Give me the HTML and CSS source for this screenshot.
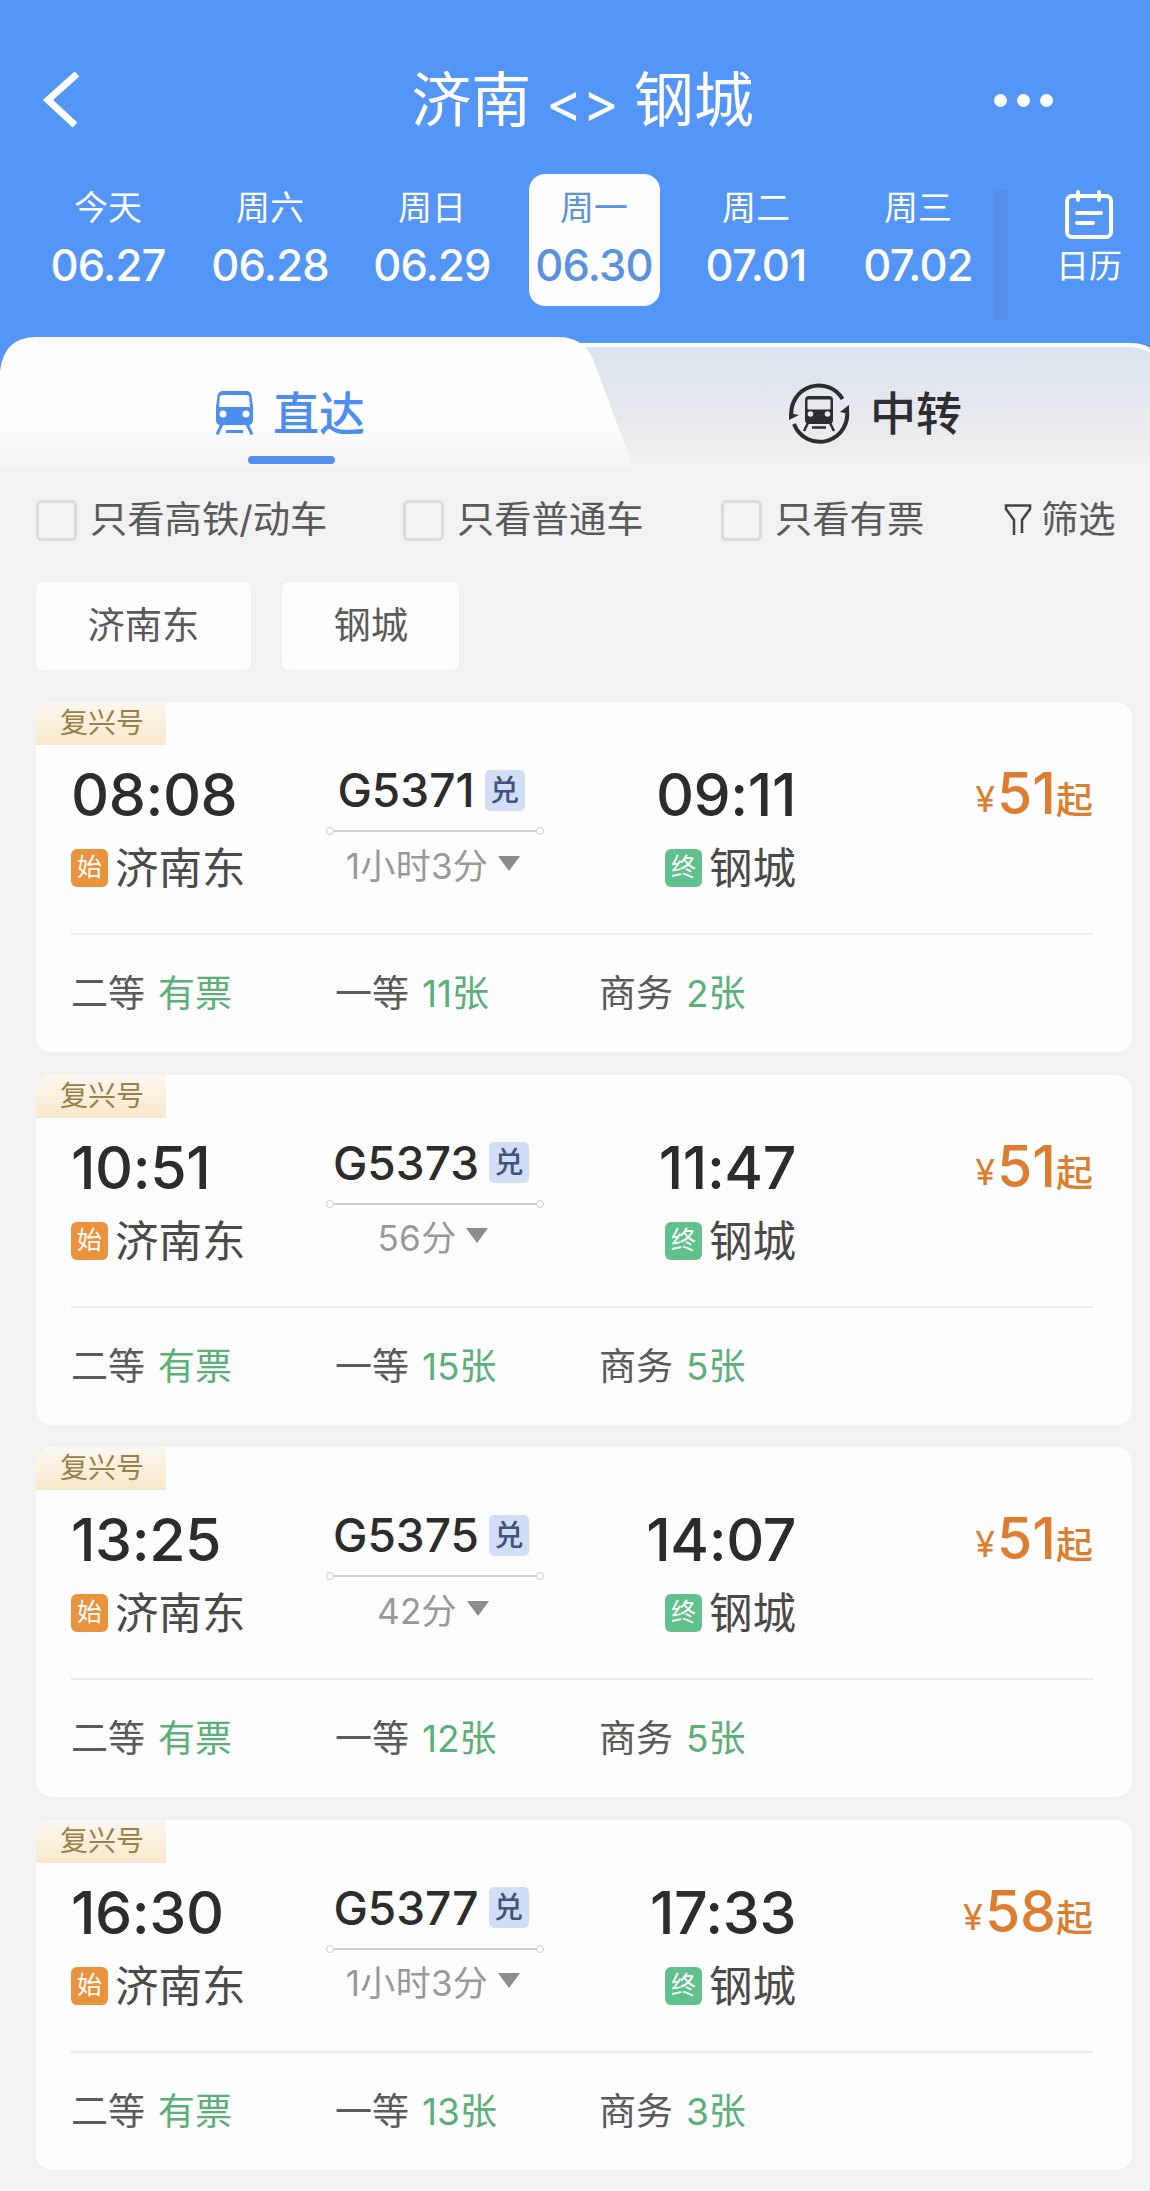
FILE: index.html
```html
<!DOCTYPE html>
<html lang="zh-CN">

<head>
    <meta charset="UTF-8">
    <title>济南 - 钢城</title>
    <link rel="stylesheet" href="styles.css">
</head>

<body>

    <header>
        <div class="title-bar">
            <svg class="back" width="38" height="56" viewBox="0 0 38 56">
                <path d="M35 2L6 28l27 25" fill="none" stroke="#fff" stroke-width="7" />
            </svg>
            <h1>济南 <span>&lt;&gt;</span> 钢城</h1>
            <div class="more"><i></i><i></i><i></i></div>
        </div>

        <div class="dates">
            <div class="day"><span>今天</span><b>06.27</b></div>
            <div class="day"><span>周六</span><b>06.28</b></div>
            <div class="day"><span>周日</span><b>06.29</b></div>
            <div class="day active"><span>周一</span><b>06.30</b></div>
            <div class="day"><span>周二</span><b>07.01</b></div>
            <div class="day"><span>周三</span><b>07.02</b></div>
            <div class="split"></div>
            <div class="calendar">
                <svg width="50" height="50" viewBox="0 0 50 50" fill="none" stroke="#fff" stroke-width="4" stroke-linecap="round">
                    <rect x="3" y="6" width="44" height="41" rx="5" />
                    <path d="M14 2v8M35 2v8" />
                    <path d="M13 23h24M13 33h16" />
                </svg>
                <span>日历</span>
            </div>
        </div>
    </header>

    <div class="tabs">
        <svg class="tabs-bg" width="1150" height="129" viewBox="0 0 1150 129">
            <defs>
                <linearGradient id="grey" x1="0" y1="0" x2="0" y2="1">
                    <stop offset="0" stop-color="#dae4ec" />
                    <stop offset="0.500" stop-color="#e6e8ef" />
                    <stop offset="0.850" stop-color="#eeeeee" />
                    <stop offset="1" stop-color="#f2f2f2" />
                </linearGradient>
                <linearGradient id="white" x1="0" y1="0" x2="0" y2="1">
                    <stop offset="0.600" stop-color="#fefefe" />
                    <stop offset="1" stop-color="#f5f5f5" />
                </linearGradient>
            </defs>
            <path d="M500 6H1130Q1143 6 1150 11V129H500z" fill="#fcfdfd" />
            <path d="M500 10H1128Q1143 10 1150 16V129H500z" fill="url(#grey)" />
            <path d="M0 129V34Q4 0 36 0H558Q582 0 592 20L633 129z" fill="url(#white)" />
        </svg>
        <div class="tab direct">
            <svg class="train" width="42" height="46" viewBox="0 0 42 46">
                <path d="M9 1h23q5 0 5.500 5L39 17v13q0 5-5 5H7q-5 0-5-5V17L3.500 6Q4 1 9 1z" fill="#4c8df0" />
                <path d="M8 5h25q2 0 2.200 2L36 17H5L5.800 7Q6 5 8 5z" fill="#fefefe" />
                <circle cx="9" cy="24" r="3.500" fill="#fefefe" />
                <circle cx="32" cy="24" r="3.500" fill="#fefefe" />
                <path d="M8 34L3 44.500M33 34l5 10.500M12 41.500h17" stroke="#4c8df0" stroke-width="3" />
            </svg>
            <span>直达</span>
        </div>
        <div class="tab transfer">
            <svg width="62" height="62" viewBox="0 0 62 62">
                <g fill="none" stroke="#2e2e32" stroke-width="4">
                    <path d="M3.500 34A27.500 27.500 0 0 1 54.500 17" />
                    <path d="M58.500 26A27.500 27.500 0 0 1 6 42" />
                </g>
                <path d="M1 38V31l10 2zM61 23v9l-9-2z" fill="#2e2e32" />
                <rect x="17" y="14" width="28" height="28" rx="4" fill="#2e2e32" />
                <rect x="19.500" y="17.500" width="23" height="10" rx="1" fill="#e8e9ee" />
                <circle cx="22.500" cy="32" r="2.800" fill="#e8e9ee" />
                <circle cx="39.500" cy="32" r="2.800" fill="#e8e9ee" />
                <path d="M20 41l-4 8M42 41l4 8M24 45.500h14" stroke="#2e2e32" stroke-width="2.500" />
            </svg>
            <span>中转</span>
        </div>
    </div>

    <div class="filters">
        <label class="only-g"><i class="box"></i>只看高铁/动车</label>
        <label class="only-k"><i class="box"></i>只看普通车</label>
        <label class="only-t"><i class="box"></i>只看有票</label>
        <div class="filter">
            <svg width="30" height="34" viewBox="0 0 30 34" fill="none" stroke="#444" stroke-width="2.500">
                <path d="M11 32V17L3 6V2.500h24V6L19 17v13" />
            </svg>
            <span>筛选</span>
        </div>
    </div>

    <div class="chips">
        <div class="chip">济南东</div>
        <div class="chip">钢城</div>
    </div>

    <div id="list"></div>

    <script>
        const trains = [
            { no: 'G5371', start: '08:08', end: '09:11', time: '1小时3分', price: 51, seats: ['有票', '11张', '2张'] },
            { no: 'G5373', start: '10:51', end: '11:47', time: '56分', price: 51, seats: ['有票', '15张', '5张'] },
            { no: 'G5375', start: '13:25', end: '14:07', time: '42分', price: 51, seats: ['有票', '12张', '5张'] },
            { no: 'G5377', start: '16:30', end: '17:33', time: '1小时3分', price: 58, seats: ['有票', '13张', '3张'] }
        ];
        const seatNames = ['二等', '一等', '商务'];

        const list = document.getElementById('list');

        list.innerHTML = trains.map(t => `
            <div class="card">
                <div class="tag">复兴号</div>
                <div class="main">
                    <div class="from">
                        <div class="clock">${t.start}</div>
                        <div class="station"><i class="mark start">始</i>济南东</div>
                    </div>
                    <div class="middle">
                        <div class="no">${t.no}<i class="swap">兑</i></div>
                        <div class="line"></div>
                        <div class="duration">${t.time}<i class="arrow"></i></div>
                    </div>
                    <div class="to">
                        <div class="clock">${t.end}</div>
                        <div class="station"><i class="mark end">终</i>钢城</div>
                    </div>
                    <div class="price"><small>¥</small>${t.price}<em>起</em></div>
                </div>
                <div class="seats">
                    ${t.seats.map((s, i) => `<div>${seatNames[i]}<span>${s}</span></div>`).join('')}
                </div>
            </div>
        `).join('');
    </script>

</body>

</html>
```
FILE: styles.css
```css
* {
    box-sizing: border-box;
}

body {
    margin: 0;
    width: 1150px;
    height: 2191px;
    overflow: hidden;
    font-family: Inter, "Noto Sans CJK SC", sans-serif;
    background: #f2f2f2;
    color: #5a5a5a;
}

i, em {
    font-style: normal;
}

header {
    height: 337px;
    padding-top: 60px;
    background: #5496f7;
    color: #fff;
}

.title-bar {
    display: flex;
    align-items: center;
    justify-content: space-between;
    height: 80px;
    padding: 0 97px 0 42px;
}

h1 {
    margin: 0;
    padding: 3px 0 0 91px;
    font-size: 60px;
    font-weight: 400;
    line-height: 73px;
    white-space: nowrap;
}

h1 span {
    margin: 0 -2px;
    font-size: 55px;
}

.more {
    display: flex;
    gap: 10px;
}

.more i {
    width: 13px;
    height: 13px;
    border-radius: 50%;
    background: #fff;
}

.dates {
    display: flex;
    margin-top: 34px;
    padding-left: 27px;
}

.day {
    display: flex;
    flex-direction: column;
    align-items: center;
    flex: none;
    width: 131px;
    height: 132px;
    margin: 0 15.500px;
    padding-top: 10px;
    border-radius: 16px;
}

.day span {
    font-size: 34px;
    line-height: 48px;
}

.day b {
    font-size: 43.500px;
    font-weight: 500;
    line-height: 66px;
    letter-spacing: -0.8px;
}

.day.active {
    background: #fdfdfd;
    color: #5a92e0;
}

.split {
    flex: none;
    width: 15px;
    height: 130px;
    margin: 16px 0 -16px -6px;
    background: #518fec;
}

.calendar {
    display: flex;
    flex-direction: column;
    align-items: center;
    width: 70px;
    margin-left: 46px;
    padding-top: 16px;
}

.calendar span {
    font-size: 33px;
    line-height: 52px;
}

.tabs {
    position: relative;
    display: flex;
    height: 129px;
    background: #5496f7;
}

.tabs-bg {
    position: absolute;
    left: 0;
    top: 0;
}

.tab {
    position: relative;
    display: flex;
    align-items: center;
    height: 152px;
    font-size: 46px;
}

.tab span {
    padding-bottom: 7px;
}

.direct {
    width: 632px;
    padding-left: 214px;
    gap: 17px;
    color: #4c8df0;
    font-weight: 500;
}

.direct::after {
    content: "";
    position: absolute;
    left: 248px;
    top: 119px;
    width: 87px;
    height: 8px;
    border-radius: 4px;
    background: #5590ee;
}

.transfer {
    padding-left: 156px;
    gap: 20px;
    color: #2e2e32;
    font-weight: 500;
}

.filters {
    display: flex;
    align-items: center;
    height: 108px;
    padding-left: 36px;
    font-size: 37.300px;
    line-height: 50px;
}

.filters label {
    display: flex;
    align-items: center;
    gap: 13px;
    white-space: nowrap;
}

.only-g {
    width: 367px;
}

.only-k {
    width: 318px;
}

.only-t {
    width: 282px;
}

.box {
    width: 41px;
    height: 41px;
    border: 3px solid #dcdcdc;
    border-radius: 5px;
    background: #f4f4f4;
}

.filter {
    display: flex;
    align-items: center;
    gap: 8px;
}

.chips {
    display: flex;
    gap: 31px;
    margin: 8px 0 32px 36px;
}

.chip {
    height: 88px;
    padding: 0 51.500px;
    border-radius: 8px;
    background: #fdfdfd;
    font-size: 37.300px;
    line-height: 88px;
}

.card {
    width: 1096px;
    height: 350px;
    margin: 0 0 22.500px 36px;
    border-radius: 16px;
    background: #fdfdfd;
    overflow: hidden;
}

.tag {
    width: 130px;
    height: 43px;
    padding-left: 24px;
    background: linear-gradient(#fbf7f0, #f8e8cb);
    color: #9b8048;
    font-size: 28px;
    line-height: 42px;
}

.main {
    display: grid;
    grid-template-columns: 255px 218px 252px 1fr;
    height: 138px;
    margin: 15px 39px 0 35px;
}

.clock {
    color: #2c2c2c;
    font-size: 59px;
    font-weight: 500;
    line-height: 69px;
    letter-spacing: -0.4px;
}

.station {
    display: flex;
    align-items: center;
    gap: 7px;
    margin-top: 9px;
    font-size: 43.500px;
    line-height: 60px;
    color: #4a4a4a;
}

.mark {
    width: 37px;
    height: 38px;
    border-radius: 6px;
    color: #fff;
    font-size: 25px;
    line-height: 37px;
    text-align: center;
}

.start {
    background: #ea933c;
}

.end {
    background: #60c18c;
}

.no {
    display: flex;
    align-items: center;
    justify-content: center;
    gap: 10px;
    height: 60px;
    margin-left: -8px;
    color: #2c2c2c;
    font-size: 46px;
    font-weight: 500;
}

.swap {
    width: 40px;
    height: 41px;
    border-radius: 5px;
    background: #d0dff6;
    color: #46527e;
    font-size: 29px;
    line-height: 42px;
    text-align: center;
}

.line {
    display: flex;
    align-items: center;
    justify-content: space-between;
    height: 2px;
    margin: 10px 0 8px;
    background: #cfcfcf;
}

.line::before,
.line::after {
    content: "";
    width: 6px;
    height: 6px;
    border: 1px solid #cfcfcf;
    border-radius: 50%;
    background: #fdfdfd;
}

.duration {
    display: flex;
    align-items: center;
    justify-content: center;
    gap: 10px;
    height: 46px;
    margin-left: -4px;
    color: #999;
    font-size: 35px;
    letter-spacing: 0.3px;
}

.arrow {
    border: 11px solid transparent;
    border-top: 15px solid #8c8c8c;
    border-bottom: 0;
}

.to {
    display: flex;
    flex-direction: column;
    align-items: flex-end;
}

.price {
    color: #dd7d30;
    font-size: 57px;
    font-weight: 500;
    line-height: 67px;
    text-align: right;
    white-space: nowrap;
}

.price small {
    position: relative;
    top: -2px;
    margin-right: 2px;
    font-size: 36px;
    font-weight: 400;
}

.price em {
    font-size: 37px;
}

.seats {
    display: grid;
    grid-template-columns: 264px 264px 1fr;
    margin: 35px 39px 0 35px;
    padding-top: 34px;
    border-top: 2px solid #eee;
    font-size: 37px;
    line-height: 50px;
}

.seats span {
    margin-left: 13px;
    color: #5bb078;
}
```
